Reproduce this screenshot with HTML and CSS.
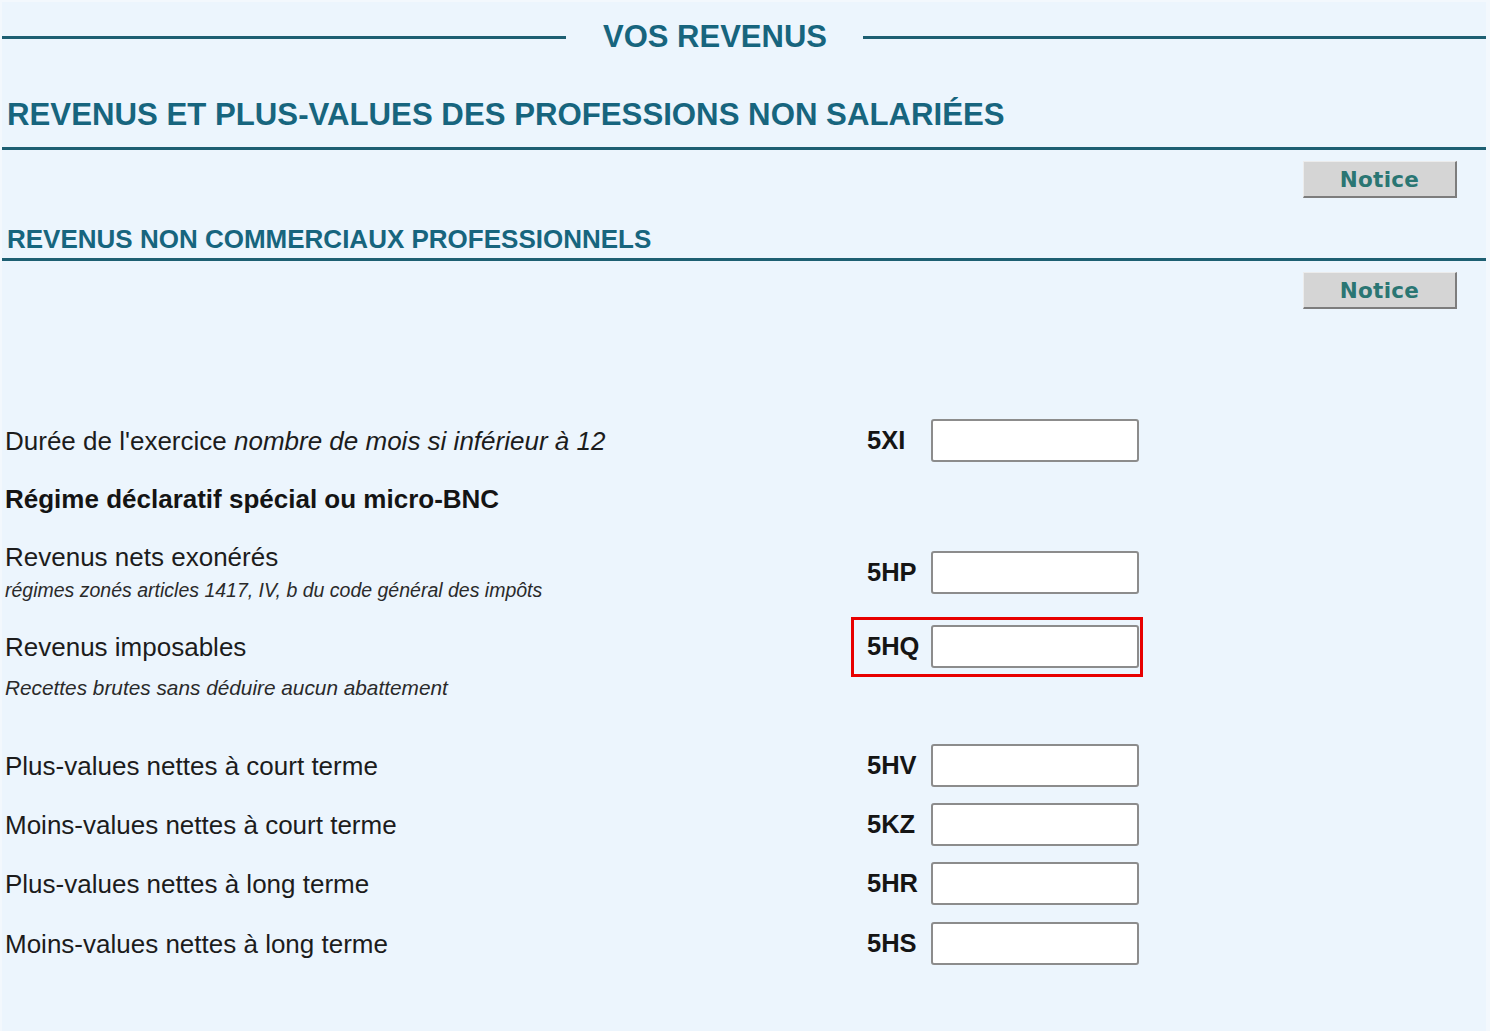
FILE: index.html
```html
<!DOCTYPE html>
<html lang="fr">
<head>
<meta charset="utf-8">
<title>Vos revenus</title>
<link rel="stylesheet" href="styles.css">
</head>
<body>
<div class="page">
  <header class="banner">
    <span class="banner-line banner-line-left"></span>
    <h1 class="banner-title">VOS REVENUS</h1>
    <span class="banner-line banner-line-right"></span>
  </header>

  <h2 class="section-title">REVENUS ET PLUS-VALUES DES PROFESSIONS NON SALARIÉES</h2>
  <div class="notice-row notice-row-1"><button class="notice-btn" type="button">Notice</button></div>

  <h3 class="subsection-title">REVENUS NON COMMERCIAUX PROFESSIONNELS</h3>
  <div class="notice-row notice-row-2"><button class="notice-btn" type="button">Notice</button></div>

  <div class="form">
    <div class="row row-duree">
      <div class="label">Durée de l'exercice <em>nombre de mois si inférieur à 12</em></div>
      <div class="code">5XI</div>
      <input class="field" type="text">
    </div>

    <div class="row-heading">Régime déclaratif spécial ou micro-BNC</div>

    <div class="row row-hp">
      <div class="label">
        <div class="label-main">Revenus nets exonérés</div>
        <div class="label-note">régimes zonés articles 1417, IV, b du code général des impôts</div>
      </div>
      <div class="code">5HP</div>
      <input class="field" type="text">
    </div>

    <div class="row row-hq">
      <div class="label">Revenus imposables</div>
      <div class="code">5HQ</div>
      <input class="field" type="text">
      <span class="highlight"></span>
    </div>
    <div class="note-line">Recettes brutes sans déduire aucun abattement</div>

    <div class="row row-hv">
      <div class="label">Plus-values nettes à court terme</div>
      <div class="code">5HV</div>
      <input class="field" type="text">
    </div>
    <div class="row row-next">
      <div class="label">Moins-values nettes à court terme</div>
      <div class="code">5KZ</div>
      <input class="field" type="text">
    </div>
    <div class="row row-next">
      <div class="label">Plus-values nettes à long terme</div>
      <div class="code">5HR</div>
      <input class="field" type="text">
    </div>
    <div class="row row-last">
      <div class="label">Moins-values nettes à long terme</div>
      <div class="code">5HS</div>
      <input class="field" type="text">
    </div>
  </div>
</div>
</body>
</html>
```

FILE: styles.css
```css
* { box-sizing: border-box; }

html, body {
  margin: 0;
  padding: 0;
  background: #f3f8fd;
}

body {
  font-family: "Liberation Sans", Arial, sans-serif;
  color: #1a1a1a;
}

.page {
  background: #ecf5fd;
  margin: 2px 4px 0 2px;
  min-height: 1029px;
}

/* Banner */
.banner {
  display: flex;
  align-items: center;
  height: 70px;
}

.banner-line {
  height: 3px;
  background: #1d5f72;
}

.banner-line-left { width: 564px; }
.banner-line-right { flex: 1; }

.banner-title {
  margin: 0 36px 0 37px;
  font-size: 31px;
  line-height: 36px;
  font-weight: bold;
  color: #17657e;
}

/* Section titles */
.section-title {
  margin: 23px 0 0 0;
  padding: 0 0 12px 5px;
  font-size: 31.2px;
  line-height: 40px;
  font-weight: bold;
  color: #17657e;
  border-bottom: 3px solid #1d5f72;
}

.subsection-title {
  margin: 25px 0 0 0;
  padding: 0 0 3px 5px;
  font-size: 26px;
  line-height: 32px;
  font-weight: bold;
  color: #17657e;
  border-bottom: 3px solid #1d5f72;
}

.notice-row {
  display: flex;
  justify-content: flex-end;
  padding-right: 29px;
  margin-top: 11px;
}

.notice-btn {
  width: 154px;
  height: 37px;
  padding: 0;
  background: #d5d5d5;
  border-style: solid;
  border-width: 1px 2px 2px 1px;
  border-color: #ececec #7d7d7d #7d7d7d #ececec;
  font-family: "DejaVu Sans", Verdana, sans-serif;
  font-weight: bold;
  font-size: 21.5px;
  color: #2a7673;
  letter-spacing: 0.3px;
}

/* Form rows */
.form {
  padding-left: 3px;
  margin-top: 110px;
}

.row {
  position: relative;
  display: grid;
  grid-template-columns: 862px 64px 208px;
  align-items: center;
  min-height: 43px;
}

.label {
  font-size: 26px;
  line-height: 30px;
  color: #1c1c1c;
}

.label em { font-style: italic; }

.label-note {
  margin-top: 6px;
  font-size: 19.5px;
  line-height: 24px;
  font-style: italic;
  color: #2a2a2a;
}

.code {
  font-size: 25.5px;
  font-weight: bold;
  color: #151515;
}

.field {
  width: 208px;
  height: 43px;
  background: #ffffff;
  border: 2px solid #8c8c8c;
  border-radius: 3px;
  padding: 0;
  margin: 0;
}

.row-heading {
  margin-top: 22px;
  font-size: 26px;
  line-height: 30px;
  font-weight: bold;
  color: #141414;
}

.row-hp { margin-top: 28px; }

.row-hq { margin-top: 23px; }

.highlight {
  position: absolute;
  left: 846px;
  top: -8px;
  width: 292px;
  height: 60px;
  border: 3px solid #e80000;
  pointer-events: none;
}

.note-line {
  margin-top: 8px;
  font-size: 20.8px;
  line-height: 24px;
  font-style: italic;
  color: #2a2a2a;
}

.row-hv { margin-top: 44px; }
.row-next { margin-top: 16px; }
.row-last { margin-top: 17px; }
```
